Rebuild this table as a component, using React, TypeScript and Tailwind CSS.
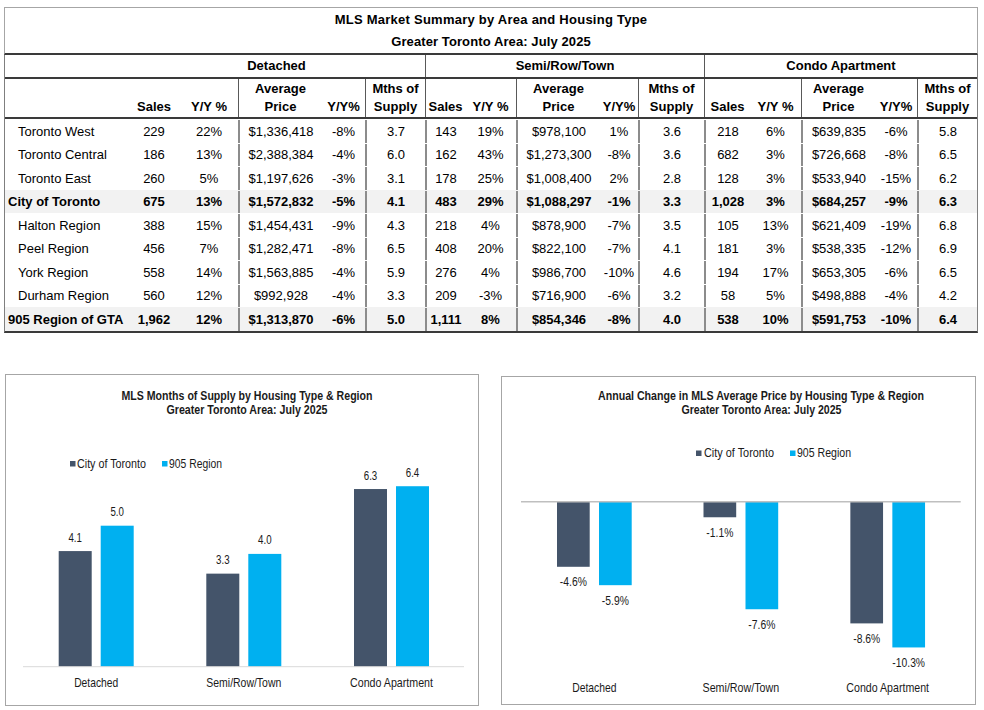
import React from "react";

const GRID =
  "grid grid-cols-[123px_52px_58px_84px_43px_60px_40px_51px_84px_38px_66px_46px_51px_74px_42px_60px]";

const LINE_COLS = [3, 5, 6, 8, 10, 11, 13, 15];

type Row = { label: string; bold?: boolean; v: string[] };

const rows: Row[] = [
  { label: "Toronto West", v: ["229", "22%", "$1,336,418", "-8%", "3.7", "143", "19%", "$978,100", "1%", "3.6", "218", "6%", "$639,835", "-6%", "5.8"] },
  { label: "Toronto Central", v: ["186", "13%", "$2,388,384", "-4%", "6.0", "162", "43%", "$1,273,300", "-8%", "3.6", "682", "3%", "$726,668", "-8%", "6.5"] },
  { label: "Toronto East", v: ["260", "5%", "$1,197,626", "-3%", "3.1", "178", "25%", "$1,008,400", "2%", "2.8", "128", "3%", "$533,940", "-15%", "6.2"] },
  { label: "City of Toronto", bold: true, v: ["675", "13%", "$1,572,832", "-5%", "4.1", "483", "29%", "$1,088,297", "-1%", "3.3", "1,028", "3%", "$684,257", "-9%", "6.3"] },
  { label: "Halton Region", v: ["388", "15%", "$1,454,431", "-9%", "4.3", "218", "4%", "$878,900", "-7%", "3.5", "105", "13%", "$621,409", "-19%", "6.8"] },
  { label: "Peel Region", v: ["456", "7%", "$1,282,471", "-8%", "6.5", "408", "20%", "$822,100", "-7%", "4.1", "181", "3%", "$538,335", "-12%", "6.9"] },
  { label: "York Region", v: ["558", "14%", "$1,563,885", "-4%", "5.9", "276", "4%", "$986,700", "-10%", "4.6", "194", "17%", "$653,305", "-6%", "6.5"] },
  { label: "Durham Region", v: ["560", "12%", "$992,928", "-4%", "3.3", "209", "-3%", "$716,900", "-6%", "3.2", "58", "5%", "$498,888", "-4%", "4.2"] },
  { label: "905 Region of GTA", bold: true, v: ["1,962", "12%", "$1,313,870", "-6%", "5.0", "1,111", "8%", "$854,346", "-8%", "4.0", "538", "10%", "$591,753", "-10%", "6.4"] },
];

const HEAD = ["Sales", "Y/Y %", "Average|Price", "Y/Y%", "Mths of|Supply"];
const headers = ["", ...HEAD, ...HEAD, ...HEAD];

const NARROW = "'Liberation Sans Narrow','Arial Narrow','Liberation Sans',Arial,sans-serif";
const DARK = "#44546a";
const LIGHT = "#00b0f0";

function T({
  x,
  y,
  w,
  children,
  bold,
  anchor = "middle",
  size = 12.5,
}: {
  x: number;
  y: number;
  w?: number;
  children: React.ReactNode;
  bold?: boolean;
  anchor?: "start" | "middle" | "end";
  size?: number;
}) {
  return (
    <text
      x={x}
      y={y}
      textAnchor={anchor}
      fontSize={size}
      fontWeight={bold ? 700 : 400}
      fontFamily={NARROW}
      textLength={w}
      lengthAdjust={w ? "spacingAndGlyphs" : undefined}
      fill="#1a1a1a"
    >
      {children}
    </text>
  );
}

function SupplyChart() {
  const base = 292.7;
  const k = 28.2;
  const groups = [
    { c: 91.2, v: [4.1, 5.0], name: "Detached", w: 44 },
    { c: 238.8, v: [3.3, 4.0], name: "Semi/Row/Town", w: 75 },
    { c: 386.5, v: [6.3, 6.4], name: "Condo Apartment", w: 83 },
  ];
  return (
    <div className="ml-[5px] w-[474px] h-[332px] border border-[#a6a6a6] bg-white shrink-0">
      <svg width="472" height="330" viewBox="1 1 472 330">
        <T x={242} y={25.7} w={251} bold size={12.5}>
          MLS Months of Supply by Housing Type &amp; Region
        </T>
        <T x={242} y={40.3} w={161} bold size={12.5}>
          Greater Toronto Area: July 2025
        </T>
        <rect x={65} y={87} width={5.5} height={5.5} fill={DARK} />
        <T x={72} y={93.5} w={69} anchor="start" size={13}>
          City of Toronto
        </T>
        <rect x={157} y={87} width={5.5} height={5.5} fill={LIGHT} />
        <T x={164} y={93.5} w={53} anchor="start" size={13}>
          905 Region
        </T>
        {groups.map((g) => (
          <g key={g.name}>
            {g.v.map((val, i) => {
              const h = val * k;
              const x = i === 0 ? g.c - 37.5 : g.c + 4.5;
              return (
                <g key={i}>
                  <rect x={x} y={base - h} width={33} height={h} fill={i === 0 ? DARK : LIGHT} />
                  <T x={x + 16.5} y={base - h - 9.5} w={13.5} size={12.5}>
                    {val.toFixed(1)}
                  </T>
                </g>
              );
            })}
            <T x={g.c} y={312.5} w={g.w} size={13.5}>
              {g.name}
            </T>
          </g>
        ))}
        <line x1={18} x2={459} y1={base} y2={base} stroke="#d9d9d9" strokeWidth={1} />
      </svg>
    </div>
  );
}

function ChangeChart() {
  const base = 125.7;
  const k = 14.15;
  const groups = [
    { c: 93.35, v: [-4.6, -5.9], name: "Detached", w: 44.3 },
    { c: 239.85, v: [-1.1, -7.6], name: "Semi/Row/Town", w: 76.7 },
    { c: 386.7, v: [-8.6, -10.3], name: "Condo Apartment", w: 82.7 },
  ];
  return (
    <div className="ml-[22px] mt-[2px] w-[475px] h-[329px] border border-[#a6a6a6] bg-white shrink-0">
      <svg width="473" height="327" viewBox="1 1 473 327">
        <T x={260} y={23.7} w={326} bold size={12.5}>
          Annual Change in MLS Average Price by Housing Type &amp; Region
        </T>
        <T x={260.5} y={38.3} w={160} bold size={12.5}>
          Greater Toronto Area: July 2025
        </T>
        <rect x={195} y={74.5} width={5.5} height={5.5} fill={DARK} />
        <T x={203} y={81.3} w={70} anchor="start" size={13}>
          City of Toronto
        </T>
        <rect x={289} y={74.5} width={5.5} height={5.5} fill={LIGHT} />
        <T x={296} y={81.3} w={54} anchor="start" size={13}>
          905 Region
        </T>
        {groups.map((g) => (
          <g key={g.name}>
            {g.v.map((val, i) => {
              const h = -val * k;
              const x = i === 0 ? g.c - 37.35 : g.c + 4.65;
              const label = `${val.toFixed(1)}%`;
              return (
                <g key={i}>
                  <rect x={x} y={base} width={32.7} height={h} fill={i === 0 ? DARK : LIGHT} />
                  <T x={x + 16.35} y={base + h + 19.6} w={label.length > 5 ? 32.7 : 27} size={12.8}>
                    {label}
                  </T>
                </g>
              );
            })}
            <T x={g.c} y={316} w={g.w} size={13.5}>
              {g.name}
            </T>
          </g>
        ))}
        <line x1={20} x2={459.7} y1={base} y2={base} stroke="#bfbfbf" strokeWidth={1.5} />
      </svg>
    </div>
  );
}

export default function App() {
  return (
    <div className="w-[984px] h-[710px] bg-white overflow-hidden pt-[7px] text-black font-[family-name:Liberation_Sans,Arial,sans-serif]">
      <div className="ml-[4px] w-[974px]">
        {/* Title */}
        <div className="border-x border-t border-[#a6a6a6] border-b-2 border-b-[#3a3a3a] text-[13px] font-bold">
          <div className="h-[23px] flex items-center justify-center tracking-[0.25px]">
            MLS Market Summary by Area and Housing Type
          </div>
          <div className="h-[22px] flex items-center justify-center tracking-[0.1px]">
            Greater Toronto Area: July 2025
          </div>
        </div>
        <div className="border-x border-[#7f7f7f] border-b-2 border-b-[#3a3a3a] text-[13px]">
          {/* Group header */}
          <div className={`${GRID} h-[24px] border-b-2 border-[#3a3a3a] font-bold`}>
            <div />
            <div className="col-span-5 flex items-center justify-center">Detached</div>
            <div className="col-span-5 flex items-center justify-center border-l border-[#595959]">
              Semi/Row/Town
            </div>
            <div className="col-span-5 flex items-center justify-center border-l border-[#595959]">
              Condo Apartment
            </div>
          </div>
          {/* Column header */}
          <div className={`${GRID} h-[40px] border-b-2 border-[#3a3a3a] font-bold leading-[18px]`}>
            {headers.map((h, i) => (
              <div
                key={i}
                className={`flex flex-col justify-end items-center pb-[1px] ${
                  LINE_COLS.includes(i) ? "border-l border-[#595959]" : ""
                }`}
              >
                {h.split("|").map((p, j) => (
                  <span key={j}>{p}</span>
                ))}
              </div>
            ))}
          </div>
          {/* Data */}
          {rows.map((r) => (
            <div
              key={r.label}
              className={`${GRID} h-[23.5px] pt-[1px] ${r.bold ? "bg-[#f2f2f2] font-bold" : ""}`}
            >
              <div className={`flex items-center whitespace-nowrap ${r.bold ? "pl-[3px]" : "pl-[13px]"}`}>
                {r.label}
              </div>
              {r.v.map((val, i) => (
                <div
                  key={i}
                  className={`flex items-center justify-center whitespace-nowrap ${
                    LINE_COLS.includes(i + 1) ? "border-l-2 border-[#8c8c8c]" : ""
                  }`}
                >
                  {val}
                </div>
              ))}
            </div>
          ))}
        </div>
      </div>
      <div className="flex items-start mt-[41.5px]">
        <SupplyChart />
        <ChangeChart />
      </div>
    </div>
  );
}
